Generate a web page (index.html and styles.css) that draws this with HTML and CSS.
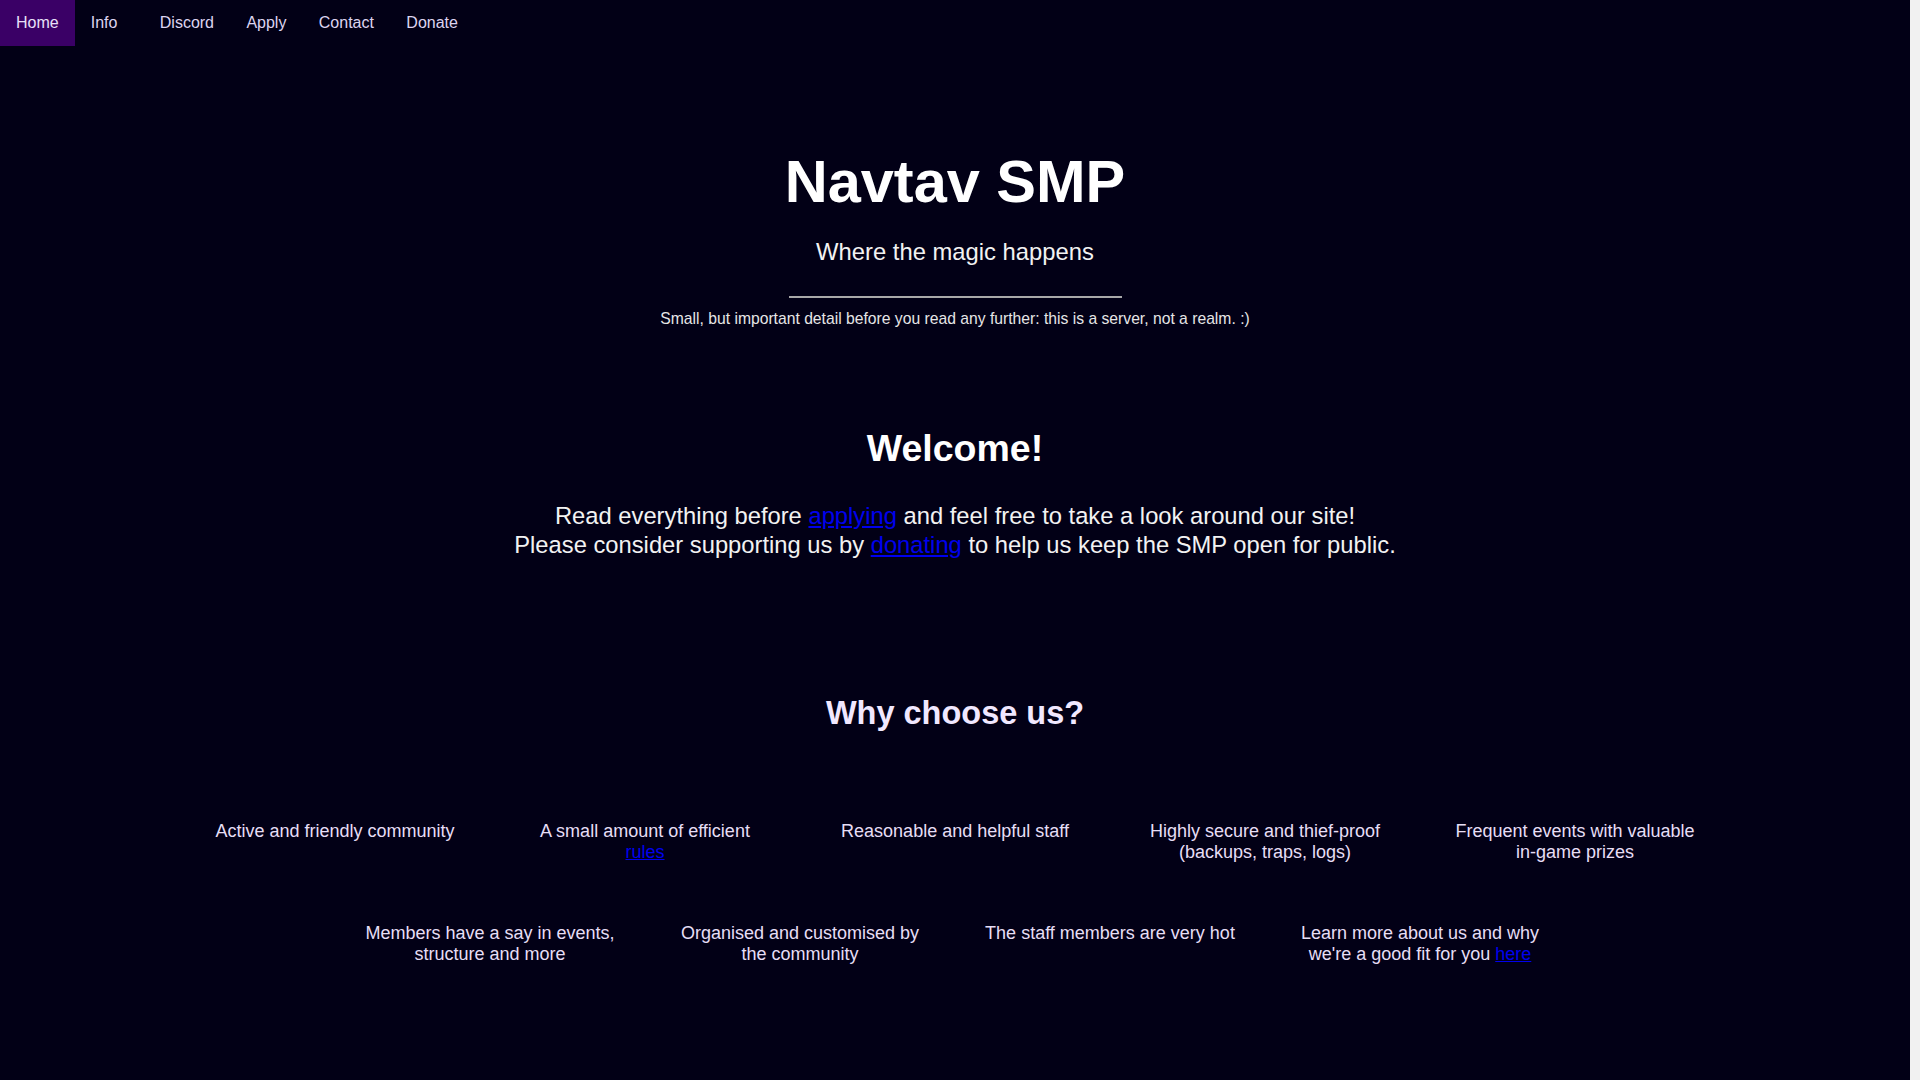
FILE: index.html
```html
<!DOCTYPE html>
<html lang="en">
<head>
<meta charset="utf-8">
<title>Navtav SMP</title>
<link rel="stylesheet" href="styles.css">
</head>
<body>
<nav class="topnav">
  <a class="nav-link active" href="#">Home</a>
  <a class="nav-link nav-dropdown" href="#">Info</a>
  <a class="nav-link" href="#">Discord</a>
  <a class="nav-link" href="#">Apply</a>
  <a class="nav-link" href="#">Contact</a>
  <a class="nav-link" href="#">Donate</a>
</nav>
<main class="page">
  <header class="hero">
    <h1 class="hero-title">Navtav SMP</h1>
    <p class="hero-tagline">Where the magic happens</p>
    <hr class="hero-rule">
    <p class="hero-notice">Small, but important detail before you read any further: this is a server, not a realm. :)</p>
  </header>
  <section class="welcome">
    <h2 class="welcome-title">Welcome!</h2>
    <p class="welcome-text">Read everything before <a href="#">applying</a> and feel free to take a look around our site!<br>Please consider supporting us by <a href="#">donating</a> to help us keep the SMP open for public.</p>
  </section>
  <section class="features">
    <h2 class="features-title">Why choose us?</h2>
    <div class="feature-grid">
      <div class="feature">Active and friendly community</div>
      <div class="feature">A small amount of efficient <a href="#">rules</a></div>
      <div class="feature">Reasonable and helpful staff</div>
      <div class="feature">Highly secure and thief-proof (backups, traps, logs)</div>
      <div class="feature">Frequent events with valuable in-game prizes</div>
      <div class="feature">Members have a say in events, structure and more</div>
      <div class="feature">Organised and customised by the community</div>
      <div class="feature">The staff members are very hot</div>
      <div class="feature">Learn more about us and why we're a good fit for you <a href="#">here</a></div>
    </div>
  </section>
</main>
</body>
</html>
```
FILE: styles.css
```css
html {
  background: #f1f1f1;
}
body {
  margin: 0 10px 0 0;
  min-height: 100vh;
  background: #020016;
  color: #ffffff;
  font-family: "Liberation Sans", Arial, sans-serif;
}
.topnav {
  display: flex;
  background: #020016;
}
.nav-link {
  display: block;
  padding: 14px 16px 14px 16.4px;
  font-size: 16px;
  line-height: 18px;
  color: #ddd4f0;
  text-decoration: none;
}
.nav-link.active {
  padding-left: 16px;
  background: #3a0066;
  color: #e8e0f8;
}
.nav-dropdown {
  padding-left: 16px;
  padding-right: 26px;
}
.page {
  padding-bottom: 120px;
  text-align: center;
}
.hero {
  padding-top: 101px;
}
.hero-title {
  margin: 0;
  font-size: 59.5px;
  font-weight: bold;
  line-height: normal;
  color: #ffffff;
}
.hero-tagline {
  margin: 22px 0 0;
  font-size: 23.8px;
  color: #f2f2f2;
}
.hero-rule {
  width: 333px;
  height: 0;
  margin: 30px auto 0;
  border: 0;
  border-top: 2px solid #a8a8a8;
}
.hero-notice {
  margin: 12px 0 0;
  font-size: 15.7px;
  color: #e6e6e6;
}
.welcome-title {
  margin: 99px 0 0;
  font-size: 37.5px;
  font-weight: bold;
  color: #ffffff;
}
.welcome-text {
  margin: 32px 0 0;
  font-size: 23.75px;
  line-height: 1.21;
  color: #f2f2f2;
}
a {
  color: #0000ee;
}
.features-title {
  margin: 136px 0 0;
  font-size: 32.5px;
  font-weight: bold;
  color: #f1e8ff;
}
.feature-grid {
  display: flex;
  flex-wrap: wrap;
  justify-content: center;
  max-width: 1550px;
  margin: 58.8px auto 0;
}
.feature {
  box-sizing: border-box;
  width: 310px;
  padding: 30px 29px;
  font-size: 18px;
  color: #e6def5;
}
```
